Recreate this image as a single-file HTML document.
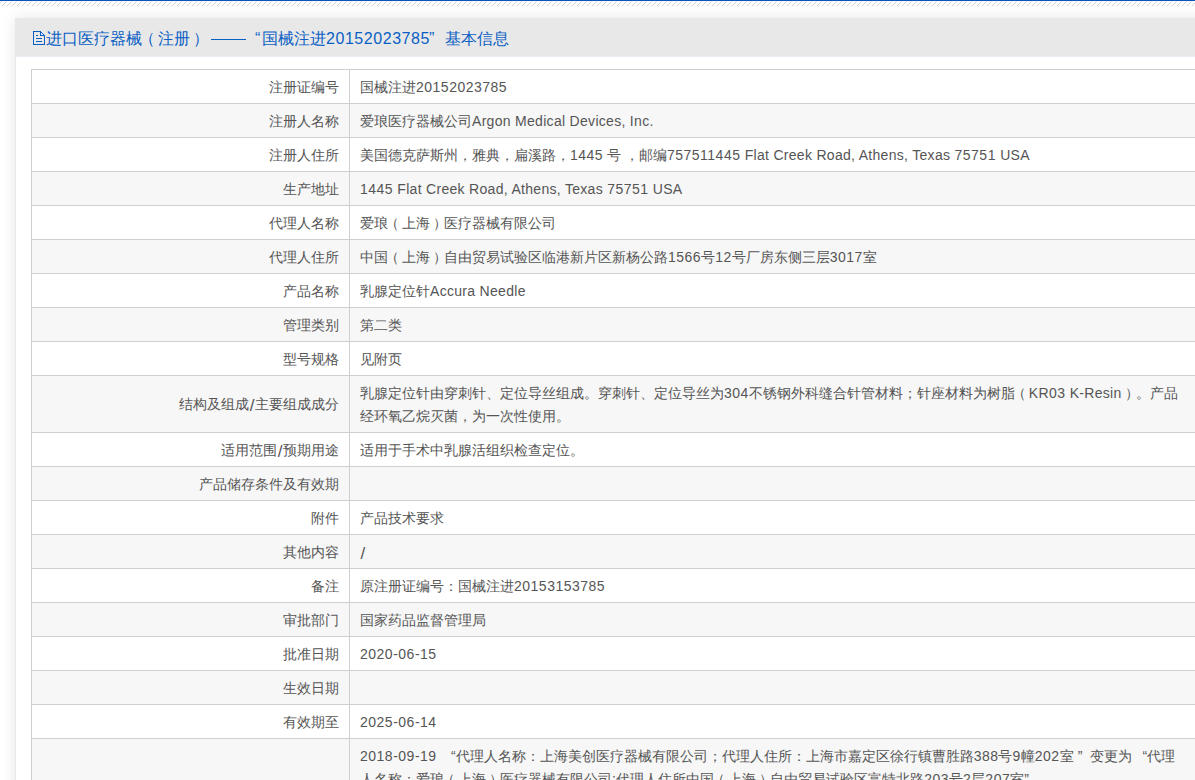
<!DOCTYPE html>
<html><head><meta charset="utf-8">
<style>
html,body{margin:0;padding:0;background:#fff;overflow:hidden;}
body{width:1195px;height:780px;position:relative;font-family:"Liberation Sans",sans-serif;color:#555;}
#topline{position:absolute;left:0;top:0;width:1195px;height:1px;background:#0a52bc;}
#hatch{position:absolute;left:0;top:1px;}
#box{position:absolute;left:15px;top:18px;width:1400px;height:900px;background:#fff;box-shadow:0 0 14px rgba(0,0,0,0.10);}
#hdr{position:absolute;left:15px;top:18px;width:1400px;height:38px;background:#e8e8e8;border-bottom:1px solid #e9ecf3;}
#lb{position:absolute;left:15px;top:57px;width:1px;height:800px;background:#e9e9e9;}
.tt{position:absolute;top:20px;height:38px;line-height:38px;font-size:16px;color:#0a5fc4;white-space:nowrap;}
#icon{position:absolute;left:0;top:0;}
table{position:absolute;left:31px;top:69px;border-collapse:collapse;width:1380px;font-size:14px;}
td{border:1px solid #cfcfcf;padding:6px 10px 4px;line-height:23px;white-space:nowrap;vertical-align:middle;}
td.l{width:297px;text-align:right;}
tr:nth-child(even) td{background:#f7f7f7;}
.e{letter-spacing:0.3px;}
.sl{font-size:17px;line-height:0;position:relative;top:2px;margin:0 0.5px;}
.lp{position:relative;left:-3px;}
.rp{position:relative;left:3px;}
.qa{display:inline-block;width:19px;text-align:right;}
.qc{display:inline-block;width:15px;text-align:right;}
i.d{font-style:normal;letter-spacing:0.5px;}
.qb{display:inline-block;width:16.5px;text-align:left;padding-left:4px;box-sizing:border-box;}
</style></head><body>
<div id="topline"></div>
<svg id="hatch" width="1195" height="5"><defs><pattern id="hp" width="5" height="5" patternUnits="userSpaceOnUse">
<rect x="1" y="0" width="1" height="1" fill="#ebe6df"/><rect x="0" y="1" width="1" height="1" fill="#d2d2d2"/><rect x="4" y="2" width="1" height="1" fill="#d2d2d2"/><rect x="3" y="3" width="1" height="1" fill="#d2d2d2"/><rect x="2" y="4" width="1" height="1" fill="#d2d2d2"/>
</pattern></defs><rect width="1195" height="5" fill="url(#hp)"/></svg>
<div id="box"></div>
<div id="hdr"></div><div id="lb"></div>
<svg id="icon" width="60" height="60" shape-rendering="crispEdges" fill="#0a5fc4">
<rect x="33" y="31" width="1" height="14"/>
<rect x="33" y="44" width="12" height="1"/>
<rect x="44" y="35" width="1" height="10"/>
<rect x="33" y="31" width="8" height="1"/>
<rect x="40" y="31" width="1" height="5"/>
<rect x="40" y="35" width="5" height="1"/>
<rect x="41" y="32" width="1" height="1"/>
<rect x="42" y="33" width="1" height="1"/>
<rect x="43" y="34" width="1" height="1"/>
<rect x="36" y="35" width="2" height="1"/>
<rect x="36" y="38" width="6" height="1"/>
<rect x="36" y="41" width="6" height="1"/>
</svg>
<div class="tt" style="left:46px">进口医疗器械</div>
<div class="tt" style="left:139px">（</div>
<div class="tt" style="left:158px">注册</div>
<div class="tt" style="left:193px">）</div>
<div style="position:absolute;left:211px;top:39px;width:35px;height:1px;background:#0a5fc4"></div>
<div class="tt" style="left:255px">“</div>
<div class="tt" style="left:262px">国械注进<span style="letter-spacing:0.55px">20152023785</span></div>
<div class="tt" style="left:429px">”</div>
<div class="tt" style="left:445px">基本信息</div>
<table>
<tr><td class="l">注册证编号</td><td class="v">国械注进<span class="e"><i class="d">20152023785</i></span></td></tr>
<tr><td class="l">注册人名称</td><td class="v">爱琅医疗器械公司<span class="e">Argon Medical Devices, Inc.</span></td></tr>
<tr><td class="l">注册人住所</td><td class="v">美国德克萨斯州，雅典，扁溪路，<span class="e"><i class="d">1445</i></span> 号 ，邮编<span class="e"><i class="d">757511445</i> Flat Creek Road, Athens, Texas <i class="d">75751</i> USA</span></td></tr>
<tr><td class="l">生产地址</td><td class="v"><span class="e"><i class="d">1445</i> Flat Creek Road, Athens, Texas <i class="d">75751</i> USA</span></td></tr>
<tr><td class="l">代理人名称</td><td class="v">爱琅<span class="lp">（</span>上海<span class="rp">）</span>医疗器械有限公司</td></tr>
<tr><td class="l">代理人住所</td><td class="v">中国<span class="lp">（</span>上海<span class="rp">）</span>自由贸易试验区临港新片区新杨公路<span class="e"><i class="d">1566</i></span>号<span class="e"><i class="d">12</i></span>号厂房东侧三层<span class="e"><i class="d">3017</i></span>室</td></tr>
<tr><td class="l">产品名称</td><td class="v">乳腺定位针<span class="e">Accura Needle</span></td></tr>
<tr><td class="l">管理类别</td><td class="v">第二类</td></tr>
<tr><td class="l">型号规格</td><td class="v">见附页</td></tr>
<tr><td class="l" style="padding:5px 10px 5px">结构及组成<span class="sl">/</span>主要组成成分</td><td class="v">乳腺定位针由穿刺针、定位导丝组成。穿刺针、定位导丝为<span class="e"><i class="d">304</i></span>不锈钢外科缝合针管材料；针座材料为树脂<span class="lp">（</span><span class="e">KR<i class="d">03</i> K-Resin</span><span class="rp">）</span>。产品<br>经环氧乙烷灭菌，为一次性使用。</td></tr>
<tr><td class="l">适用范围<span class="sl">/</span>预期用途</td><td class="v">适用于手术中乳腺活组织检查定位。</td></tr>
<tr><td class="l">产品储存条件及有效期</td><td class="v"></td></tr>
<tr><td class="l">附件</td><td class="v">产品技术要求</td></tr>
<tr><td class="l">其他内容</td><td class="v"><span class="sl">/</span></td></tr>
<tr><td class="l">备注</td><td class="v">原注册证编号：国械注进<span class="e"><i class="d">20153153785</i></span></td></tr>
<tr><td class="l">审批部门</td><td class="v">国家药品监督管理局</td></tr>
<tr><td class="l">批准日期</td><td class="v"><span class="e"><i class="d">2020-06-15</i></span></td></tr>
<tr><td class="l">生效日期</td><td class="v"></td></tr>
<tr><td class="l">有效期至</td><td class="v"><span class="e"><i class="d">2025-06-14</i></span></td></tr>
<tr><td class="l" style="padding:5px 10px 5px"></td><td class="v"><span class="e"><i class="d">2018-09-19</i></span><span class="qa">“</span>代理人名称：上海美创医疗器械有限公司；代理人住所：上海市嘉定区徐行镇曹胜路<span class="e"><i class="d">388</i></span>号<span class="e"><i class="d">9</i></span>幢<span class="e"><i class="d">202</i></span>室<span class="qb">”</span>变更为<span class="qc">“</span>代理<br>人名称：爱琅<span class="lp">（</span>上海<span class="rp">）</span>医疗器械有限公司<span class="e">;</span>代理人住所中国<span class="lp">（</span>上海<span class="rp">）</span>自由贸易试验区富特北路<span class="e"><i class="d">203</i></span>号<span class="e"><i class="d">2</i></span>层<span class="e"><i class="d">207</i></span>室”</td></tr>
</table>
</body></html>
